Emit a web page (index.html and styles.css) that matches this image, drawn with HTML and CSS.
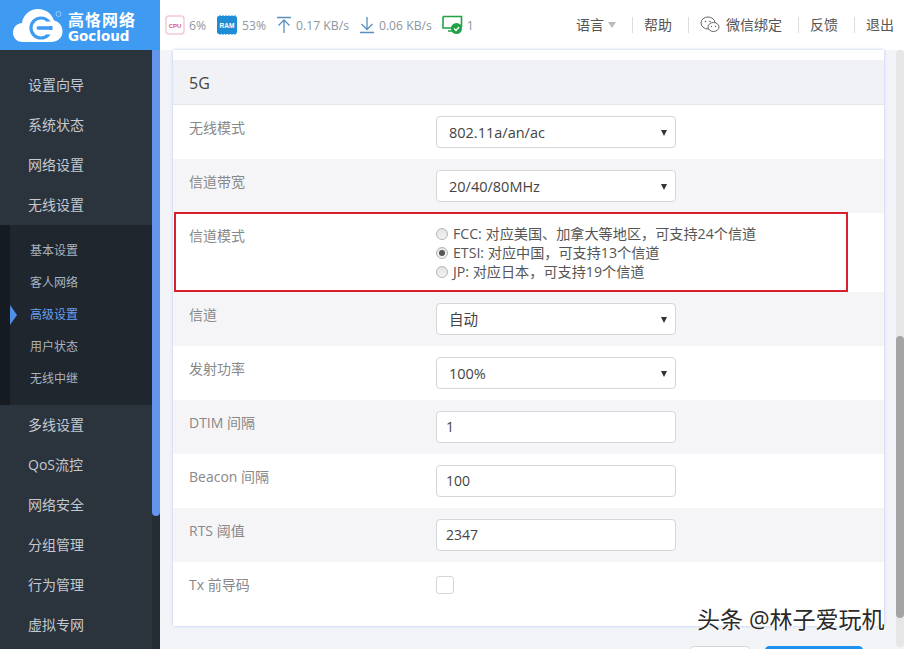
FILE: index.html
```html
<!DOCTYPE html>
<html lang="zh">
<head>
<meta charset="utf-8">
<title>Gocloud</title>
<link rel="stylesheet" href="styles.css">
</head>
<body>
<div class="app">
  <header class="topbar">
    <div class="logo">
      <svg class="logo-mark" width="54" height="36" viewBox="0 0 54 36">
        <path d="M11 34 C4 34 1 29 1 25 C1 19 5 15.500 10 15 C11 7 18 1 26 1 C34 1 40 6 42 12.500 C47 13.500 50.500 18 50.500 23.500 C50.500 30 45 34 39 34 Z" fill="#fff"/>
        <circle cx="29" cy="20" r="10" fill="none" stroke="#3f9bf2" stroke-width="3.200"/>
        <rect x="35" y="13.500" width="8" height="4.500" fill="#fff"/>
        <rect x="35" y="22" width="8" height="4.500" fill="#fff"/>
        <rect x="24.500" y="18.300" width="15.500" height="3.400" rx="1.700" fill="#3f9bf2"/>
        <circle cx="46.500" cy="6" r="2.500" fill="none" stroke="#bcdcfa" stroke-width=".7"/>
      </svg>
      <div class="logo-text">
        <span class="logo-cn">高恪网络</span>
        <span class="logo-en">Gocloud</span>
      </div>
    </div>
    <div class="stats">
      <span class="stat">
        <svg width="20" height="20" viewBox="0 0 20 20"><rect x="1" y="1" width="18" height="18" rx="3" fill="#fff" stroke="#f3c9d6" stroke-width="1.500"/><text x="10" y="12.500" class="chip-red" text-anchor="middle">CPU</text></svg>
        6%
      </span>
      <span class="stat">
        <svg width="22" height="20" viewBox="0 0 22 20"><rect x="1" y="1" width="20" height="18" rx="2" fill="#1f8dd6"/><path d="M4 1V0M7 1V0M10 1V0M13 1V0M16 1V0M19 1V0M4 20V19M7 20V19M10 20V19M13 20V19M16 20V19M19 20V19" stroke="#1f8dd6"/><text x="11" y="12.800" class="chip-white" text-anchor="middle">RAM</text></svg>
        53%
      </span>
      <span class="stat">
        <svg width="16" height="18" viewBox="0 0 16 18"><path d="M1 1.500H15M8 17V4M2.500 9.500L8 4l5.500 5.500" fill="none" stroke="#5b8fc0" stroke-width="1.300"/></svg>
        0.17 KB/s
      </span>
      <span class="stat">
        <svg width="16" height="18" viewBox="0 0 16 18"><path d="M1 16.500H15M8 1V13.500M2.500 8L8 13.500 13.500 8" fill="none" stroke="#5b8fc0" stroke-width="1.300"/></svg>
        0.06 KB/s
      </span>
      <span class="stat">
        <svg width="21" height="20" viewBox="0 0 21 20"><path d="M1 1.500H19.500V12M10 13H1V1.500M6 16H11" fill="none" stroke="#1fa345" stroke-width="1.600"/><circle cx="14.500" cy="13.500" r="5.500" fill="#1fa345"/><path d="M12 13.500l2 2 3-3.500" fill="none" stroke="#fff" stroke-width="1.300"/></svg>
        1
      </span>
    </div>
    <nav class="toplinks">
      <a class="toplink">语言<i class="caret"></i></a>
      <a class="toplink">帮助</a>
      <a class="toplink wechat">
        <svg width="20" height="18" viewBox="0 0 20 18"><ellipse cx="8" cy="7" rx="7" ry="6" fill="#fff" stroke="#666" stroke-width="1"/><ellipse cx="13.500" cy="11" rx="5.500" ry="4.500" fill="#fff" stroke="#666" stroke-width="1"/><circle cx="5.500" cy="5.500" r=".8" fill="#666"/><circle cx="10" cy="5.500" r=".8" fill="#666"/><circle cx="11.500" cy="10.500" r=".7" fill="#666"/><circle cx="15.500" cy="10.500" r=".7" fill="#666"/></svg>
        微信绑定
      </a>
      <a class="toplink">反馈</a>
      <a class="toplink">退出</a>
    </nav>
  </header>

  <div class="body">
    <aside class="sidebar">
      <ul class="menu">
        <li class="menu-item">设置向导</li>
        <li class="menu-item">系统状态</li>
        <li class="menu-item">网络设置</li>
        <li class="menu-item">无线设置</li>
      </ul>
      <ul class="submenu">
        <li class="sub-item">基本设置</li>
        <li class="sub-item">客人网络</li>
        <li class="sub-item active">高级设置</li>
        <li class="sub-item">用户状态</li>
        <li class="sub-item">无线中继</li>
      </ul>
      <ul class="menu">
        <li class="menu-item">多线设置</li>
        <li class="menu-item">QoS流控</li>
        <li class="menu-item">网络安全</li>
        <li class="menu-item">分组管理</li>
        <li class="menu-item">行为管理</li>
        <li class="menu-item">虚拟专网</li>
      </ul>
      <div class="side-scroll"><div class="side-thumb"></div></div>
    </aside>

    <main class="main">
      <section class="card">
        <h2 class="card-title">5G</h2>
        <div class="row">
          <label class="row-label">无线模式</label>
          <div class="select">802.11a/an/ac<i class="arrow"></i></div>
        </div>
        <div class="row alt">
          <label class="row-label">信道带宽</label>
          <div class="select">20/40/80MHz<i class="arrow"></i></div>
        </div>
        <div class="row tall">
          <label class="row-label">信道模式</label>
          <div class="radios">
            <div class="radio-line"><i class="radio"></i>FCC: 对应美国、加拿大等地区，可支持24个信道</div>
            <div class="radio-line"><i class="radio on"></i>ETSI: 对应中国，可支持13个信道</div>
            <div class="radio-line"><i class="radio"></i>JP: 对应日本，可支持19个信道</div>
          </div>
          <div class="highlight"></div>
        </div>
        <div class="row alt">
          <label class="row-label">信道</label>
          <div class="select">自动<i class="arrow"></i></div>
        </div>
        <div class="row">
          <label class="row-label">发射功率</label>
          <div class="select">100%<i class="arrow"></i></div>
        </div>
        <div class="row alt">
          <label class="row-label">DTIM 间隔</label>
          <div class="input">1</div>
        </div>
        <div class="row">
          <label class="row-label">Beacon 间隔</label>
          <div class="input">100</div>
        </div>
        <div class="row alt">
          <label class="row-label">RTS 阈值</label>
          <div class="input">2347</div>
        </div>
        <div class="row last">
          <label class="row-label">Tx 前导码</label>
          <i class="check"></i>
        </div>
      </section>
      <div class="actions">
        <button class="btn"></button>
        <button class="btn primary"></button>
      </div>
      <div class="watermark">头条 @林子爱玩机</div>
    </main>

    <div class="page-scroll"><div class="page-thumb"></div></div>
  </div>
</div>
</body>
</html>
```
FILE: styles.css
```css
* { box-sizing: border-box; }
html, body { margin: 0; height: 100%; overflow: hidden; }
body {
  font-family: "Open Sans", "Noto Sans CJK SC", sans-serif;
  font-size: 14px;
  color: #555;
  background: #fff;
}
ul { list-style: none; margin: 0; padding: 0; }
.app { display: flex; flex-direction: column; height: 649px; }

.topbar { display: flex; align-items: center; height: 50px; flex: none; background: #fff; }
.logo {
  width: 160px; height: 50px; flex: none;
  background: #3f9bf2; display: flex; align-items: center; gap: 2px; padding-left: 12px;
}
.logo-mark { flex: none; margin-top: 1px; }
.logo-text { display: flex; flex-direction: column; color: #fff; margin-top: 4px; }
.logo-cn { font-size: 16px; line-height: 17px; font-weight: 700; letter-spacing: 1px; white-space: nowrap; }
.logo-en { font-family: "DejaVu Sans", sans-serif; font-size: 13.500px; line-height: 14px; font-weight: 700; white-space: nowrap; }

.stats { display: flex; align-items: center; gap: 10px; padding-left: 5px; color: #8e96a3; font-size: 12.200px; white-space: nowrap; }
.stat { display: flex; align-items: center; gap: 4px; }
.stat svg { flex: none; }
.chip-red { font: 700 6px "Liberation Sans", sans-serif; fill: #d9587d; }
.chip-white { font: 700 6.500px "Liberation Sans", sans-serif; fill: #fff; }

.toplinks { margin-left: auto; display: flex; align-items: center; margin-top: -1px; padding-right: 10px; color: #555; font-size: 14px; }
.toplink { display: flex; align-items: center; gap: 4px; padding: 0 16px 0 11px; height: 16px; border-left: 1px solid #ddd; white-space: nowrap; line-height: 16px; }
.toplink:first-child { border-left: 0; }
.toplink:last-child { padding-right: 0; }
.wechat { gap: 6px; }
.caret { width: 0; height: 0; border-left: 4px solid transparent; border-right: 4px solid transparent; border-top: 6px solid #bbb; }

.body { flex: 1; display: flex; min-height: 0; background: #f3f4f8; }

.sidebar { position: relative; width: 160px; flex: none; overflow: hidden; background: #2b333d; padding-right: 8px; }
.menu-item { height: 40px; line-height: 40px; padding-left: 28px; color: #c4c9cf; font-size: 14px; white-space: nowrap; }
.submenu { height: 180px; padding: 10px 0 0 0; background: linear-gradient(90deg, #161b21 0 10px, #1f262e 10px); }
.sub-item { position: relative; height: 32px; line-height: 32px; padding-left: 30px; color: #a9b3bf; font-size: 12px; }
.sub-item.active { color: #6b9ff0; }
.sub-item.active::before {
  content: ""; position: absolute; left: 10px; top: 6px;
  border-left: 7px solid #4f8fe8; border-top: 10px solid transparent; border-bottom: 10px solid transparent;
}
.menu:first-child { padding-top: 15px; }
.side-scroll { position: absolute; top: 0; right: 0; width: 8px; height: 100%; background: #252c34; }
.side-thumb { width: 8px; height: 466px; background: #6495ed; border-radius: 0 0 4px 4px; }

.main { position: relative; flex: 1; min-width: 0; padding: 0 12px 0 13px; }
.card { background: #fff; padding-top: 10px; box-shadow: 0 0 3px #b4c6ee; }
.card-title { margin: 0; height: 45px; line-height: 47px; padding-left: 16px; background: #f0f2f6; border-bottom: 1px solid #e4e6ea; font-weight: 400; font-size: 16px; color: #444; }
.row { position: relative; height: 54px; display: flex; align-items: flex-start; padding: 11px 0 0 16px; }
.row.alt { background: #f5f5f8; }
.row.tall { height: 79px; }
.row.last { height: 64px; }
.row-label { width: 247px; flex: none; font-size: 14px; line-height: 24px; color: #888; white-space: nowrap; }
.select, .input {
  position: relative; width: 240px; height: 32px;
  background: #fff; border: 1px solid #d4d6da; border-radius: 4px;
  color: #444;
}
.select { padding-left: 12px; font-size: 14.500px; line-height: 31px; }
.input { padding-left: 9px; font-size: 14px; line-height: 29px; }
.arrow { position: absolute; right: 8px; top: 13px; border-left: 3.500px solid transparent; border-right: 3.500px solid transparent; border-top: 6px solid #333; }
.radios { margin-top: 0; }
.radio-line { display: flex; align-items: center; gap: 5px; height: 19px; line-height: 19px; font-size: 14.150px; color: #555; white-space: nowrap; }
.radio { width: 12px; height: 12px; flex: none; border-radius: 50%; border: 1px solid #b5b5b5; background: linear-gradient(#e4e4e4, #f2f2f2); position: relative; }
.radio.on::after { content: ""; position: absolute; left: 2px; top: 2px; width: 6px; height: 6px; border-radius: 50%; background: #555; }
.highlight { position: absolute; left: 1px; top: -1px; width: 674px; height: 80px; border: 2px solid #d8202c; pointer-events: none; }
.check { width: 18px; height: 18px; border: 1px solid #d4d6da; border-radius: 3px; background: #fff; margin-top: 3px; }

.actions { display: flex; justify-content: flex-end; gap: 15px; padding: 20px 21px 0 0; }
.btn { width: 60px; height: 34px; flex: none; border: 1px solid #d4d6da; border-radius: 4px; background: #fff; }
.btn.primary { width: 98px; background: #1f8ff0; border-color: #1f8ff0; }

.watermark {
  position: absolute; left: 537px; top: 554px;
  font-size: 23px; line-height: 30px; color: #2a2a2a; white-space: nowrap;
  text-shadow: 1px 1px 0 #fff, -1px 0 0 #fff;
}
.page-scroll { width: 8px; height: 597px; flex: none; background: #e6e6e6; border-radius: 4px; }
.page-thumb { margin-top: 286px; height: 282px; background: #a4a4a4; border-radius: 4px; }
```
